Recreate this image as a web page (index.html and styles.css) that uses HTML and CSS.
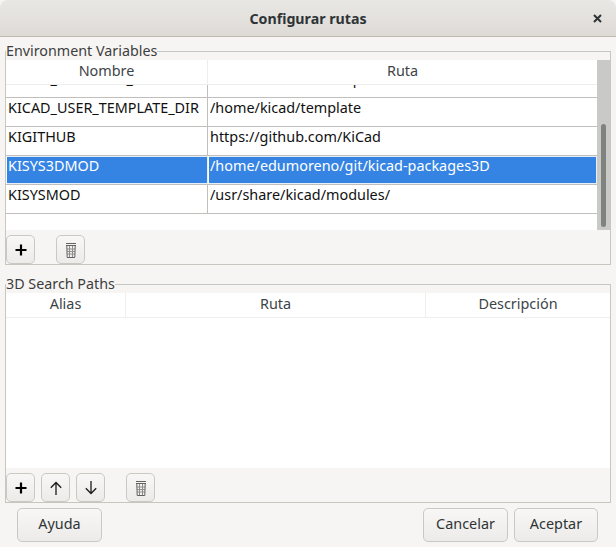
FILE: index.html
```html
<!DOCTYPE html>
<html lang="es">
<head>
  <meta charset="UTF-8">
  <meta name="viewport" content="width=device-width, initial-scale=1.0">
  <title>Configurar rutas</title>
  <link rel="stylesheet" href="styles.css">
</head>
<body>

  <svg class="icon-defs" width="0" height="0" aria-hidden="true">
    <symbol id="icon-trash" viewBox="0 0 16 16">
      <path d="M4 7h8M4.200 9.500h7.600M4.300 12h7.400M6.500 4v11.500M9.500 4v11.500" fill="none" stroke="#8f8e8c" stroke-width="1"/>
      <path d="M3 1.500h10M3 3.500h10M3.800 4l.4 11.500h7.600l.4-11.500" fill="none" stroke="#636260" stroke-width="1"/>
    </symbol>
    <symbol id="icon-plus" viewBox="0 0 16 16">
      <path d="M8 2.500v11M2.500 8h11" fill="none" stroke="#000" stroke-width="2.200"/>
    </symbol>
    <symbol id="icon-up" viewBox="0 0 16 16">
      <path d="M8 15V2.500M2.800 7.700L8 2.500l5.200 5.200" fill="none" stroke="#1a1a1a" stroke-width="1.300"/>
    </symbol>
    <symbol id="icon-down" viewBox="0 0 16 16">
      <path d="M8 1v12.500M2.800 8.300L8 13.500l5.200-5.200" fill="none" stroke="#1a1a1a" stroke-width="1.300"/>
    </symbol>
  </svg>

  <header class="titlebar">
    <h1>Configurar rutas</h1>
    <span class="close">
      <svg width="9" height="9" viewBox="0 0 9 9"><path d="M1 1l7 7M8 1L1 8" stroke="#2e3436" stroke-width="2"/></svg>
    </span>
  </header>

  <fieldset class="group">
    <legend>Environment Variables</legend>
    <div class="pane env-pane">
      <div class="grid">
        <div class="head env-cols">
          <div class="head-cell">Nombre</div>
          <div class="head-cell">Ruta</div>
        </div>
        <div class="rows">
          <div class="row env-cols scrolled">
            <div class="cell">KICAD_TEMPLATE_DIR</div>
            <div class="cell">/usr/share/kicad/template</div>
          </div>
          <div class="row env-cols">
            <div class="cell">KICAD_USER_TEMPLATE_DIR</div>
            <div class="cell">/home/kicad/template</div>
          </div>
          <div class="row env-cols">
            <div class="cell">KIGITHUB</div>
            <div class="cell">https://github.com/KiCad</div>
          </div>
          <div class="row env-cols selected">
            <div class="cell">KISYS3DMOD</div>
            <div class="cell">/home/edumoreno/git/kicad-packages3D</div>
          </div>
          <div class="row env-cols">
            <div class="cell">KISYSMOD</div>
            <div class="cell">/usr/share/kicad/modules/</div>
          </div>
        </div>
      </div>
      <div class="scrollbar"><div class="thumb"></div></div>
    </div>
    <div class="toolbar">
      <button class="tool"><svg width="16" height="16"><use href="#icon-plus"/></svg></button>
      <button class="tool spaced"><svg width="16" height="16"><use href="#icon-trash"/></svg></button>
    </div>
  </fieldset>

  <fieldset class="group second">
    <legend>3D Search Paths</legend>
    <div class="pane search-pane">
      <div class="grid">
        <div class="head search-cols">
          <div class="head-cell">Alias</div>
          <div class="head-cell">Ruta</div>
          <div class="head-cell">Descripción</div>
        </div>
      </div>
    </div>
    <div class="toolbar">
      <button class="tool"><svg width="16" height="16"><use href="#icon-plus"/></svg></button>
      <button class="tool"><svg width="16" height="16"><use href="#icon-up"/></svg></button>
      <button class="tool"><svg width="16" height="16"><use href="#icon-down"/></svg></button>
      <button class="tool spaced"><svg width="16" height="16"><use href="#icon-trash"/></svg></button>
    </div>
  </fieldset>

  <footer class="actions">
    <button class="btn">Ayuda</button>
    <div class="actions-right">
      <button class="btn">Cancelar</button>
      <button class="btn narrow">Aceptar</button>
    </div>
  </footer>

</body>
</html>
```

FILE: styles.css
```css
html { background: #f6f5f4; }
body { margin: 0; width: 616px; height: 547px; overflow: hidden; background: #f6f5f4; font-family: "Noto Sans", sans-serif; font-size: 14.4px; color: #111; }
.icon-defs { position: absolute; }

.titlebar { height: 36px; display: flex; align-items: center; justify-content: center; position: relative; background: linear-gradient(#e9e7e4, #dedbd7); border-bottom: 1px solid #bfb8b0; border-radius: 8px 8px 0 0; }
.titlebar h1 { margin: 0; font-size: 14.2px; font-weight: 700; color: #2e3436; }
.close { position: absolute; right: 14px; top: 14px; width: 9px; height: 9px; display: flex; }

.group { margin: 5px 5px 0; padding: 0; width: 606px; box-sizing: border-box; min-width: 0; border: 1px solid #c9c6bf; height: 223px; }
.group.second { margin-top: 10px; height: 228px; }
.group legend { margin-left: 0; padding: 0; height: 18px; line-height: 18px; font-size: 14.3px; color: #3d3d3d; }

.pane { display: flex; background: #fff; }
.env-pane { height: 170px; }
.search-pane { height: 175px; }
.grid { flex: 1; min-width: 0; display: flex; flex-direction: column; }

.head { height: 24px; flex: none; display: grid; border-bottom: 1px solid #eeeeec; box-sizing: content-box; }
.head-cell { text-align: center; line-height: 21px; color: #3d4448; border-right: 1px solid #eeeeec; }
.head-cell:last-child { border-right: none; }
.env-cols { grid-template-columns: 202px 1fr; }
.search-cols { grid-template-columns: 120px 300px 1fr; }

.rows { flex: 1; overflow: hidden; }
.row { height: 28px; display: grid; border-bottom: 1px solid #c0bfbc; }
.row.scrolled { margin-top: -16px; }
.cell { line-height: 20px; padding-left: 2px; white-space: nowrap; border-right: 1px solid #c0bfbc; }
.cell:last-child { border-right: none; }
.row.selected .cell { background: #3584e4; color: #fff; border: 1px solid #e8eef6; border-left-color: #fff; line-height: 18px; padding-left: 1px; }

.scrollbar { width: 13px; flex: none; background: #c9c9c7; padding: 64px 4px 3px; box-sizing: border-box; }
.thumb { height: 100%; background: #7f8281; border-radius: 3px; }

.toolbar { height: 34px; box-sizing: border-box; padding: 5px 0 0; display: flex; gap: 6px; }
.tool { width: 29px; height: 29px; padding: 0; display: flex; align-items: center; justify-content: center; border: 1px solid #cdc7c2; border-radius: 5px; background: linear-gradient(#f8f7f6, #edebe9); }
.tool.spaced { margin-left: 15px; }

.actions { margin: 5px 18px 0 17px; display: flex; justify-content: space-between; }
.actions-right { display: flex; gap: 6px; }
.btn { width: 85px; height: 34px; padding: 0 0 3px; font: inherit; color: #2e3436; border: 1px solid #cdc7c2; border-radius: 5px; background: linear-gradient(#f8f7f6, #edebe9); }
.btn.narrow { width: 84px; }
```
